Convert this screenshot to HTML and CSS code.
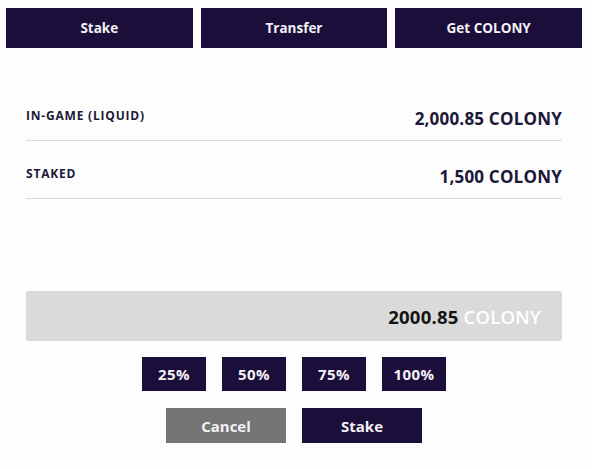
FILE: index.html
```html
<!DOCTYPE html>
<html>
<head>
<meta charset="utf-8">
<link rel="stylesheet" href="styles.css">
</head>
<body>
<div class="page">
  <div class="tabs">
    <button class="tab">Stake</button>
    <button class="tab">Transfer</button>
    <button class="tab">Get COLONY</button>
  </div>
  <div class="balances">
    <div class="row">
      <span class="label">IN-GAME (LIQUID)</span>
      <span class="value">2,000.85 COLONY</span>
    </div>
    <div class="row">
      <span class="label">STAKED</span>
      <span class="value">1,500 COLONY</span>
    </div>
  </div>
  <div class="amount">
    <span class="num">2000.85</span><span class="unit">COLONY</span>
  </div>
  <div class="percents">
    <button class="pct">25%</button>
    <button class="pct">50%</button>
    <button class="pct">75%</button>
    <button class="pct">100%</button>
  </div>
  <div class="actions">
    <button class="act cancel">Cancel</button>
    <button class="act primary">Stake</button>
  </div>
</div>
</body>
</html>
```
FILE: styles.css
```css
* { box-sizing: border-box; }
html, body { margin: 0; padding: 0; background: #fdfdfd; }
body { font-family: "Open Sans", "DejaVu Sans", sans-serif; }
.page { width: 592px; padding: 8px 10px 0 6px; }
button { font-family: inherit; border: none; cursor: pointer; padding: 0; }
.tabs { display: flex; gap: 8px; }
.tab {
  flex: 1; height: 40px; background: #1c0e3a; color: #f2f2f6;
  font-size: 13.5px; font-weight: 700;
}
.balances { margin: 35px 20px 0 20px; }
.row {
  display: flex; justify-content: space-between; align-items: center;
  height: 58px; border-bottom: 1px solid #dcdcdc; padding-top: 8px;
}
.label { font-size: 12px; font-weight: 700; color: #1c1838; letter-spacing: 0.8px; }
.value { font-size: 17px; font-weight: 700; color: #1c1838; letter-spacing: 0.2px; margin-top: 6px; }
.amount {
  margin: 92px 20px 0 20px; height: 50px; background: #dadada; border-radius: 2px;
  display: flex; justify-content: flex-end; align-items: center; padding-right: 21px;
  font-size: 18.5px; font-weight: 700; letter-spacing: 0.2px;
}
.num { color: #141414; }
.unit { color: #ffffff; margin-left: 5px; font-weight: 600; }
.percents { display: flex; justify-content: center; gap: 16px; margin-top: 16px; }
.pct {
  width: 64px; height: 34px; background: #1c0e3a; color: #f2f2f6;
  font-size: 15px; font-weight: 700; letter-spacing: 0.4px;
}
.actions { display: flex; justify-content: center; gap: 16px; margin-top: 17px; }
.act { width: 120px; height: 35px; color: #f2f2f6; font-size: 15px; font-weight: 700; }
.cancel { background: #757575; }
.primary { background: #1c0e3a; }
```
